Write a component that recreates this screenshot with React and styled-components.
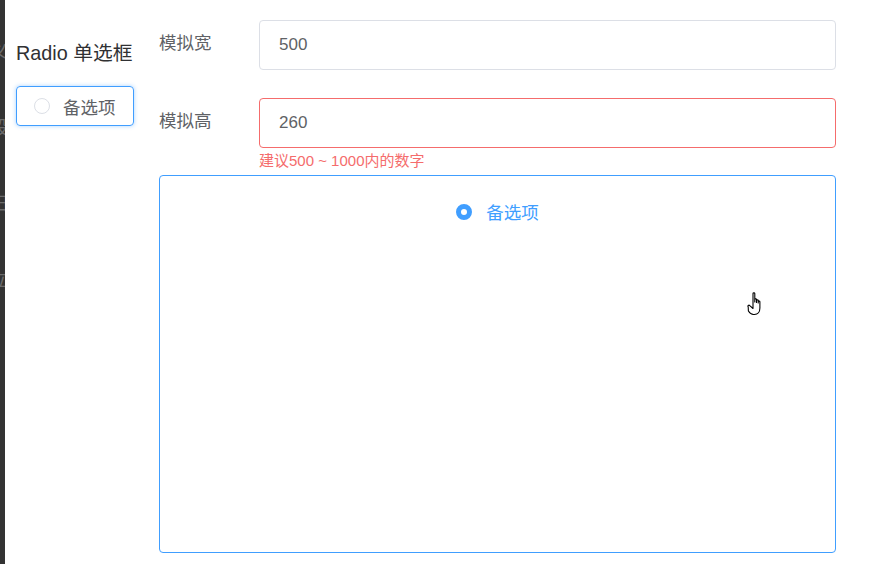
import React from 'react'
import styled, { createGlobalStyle } from 'styled-components'

const GlobalStyle = createGlobalStyle`
  html, body {
    margin: 0;
    padding: 0;
    background: #fff;
  }
  body {
    font-family: "Liberation Sans", "Noto Sans CJK SC", sans-serif;
    color: #606266;
  }
`

const Page = styled.div`
  display: flex;
  width: 884px;
  height: 564px;
  overflow: hidden;
  position: relative;
`

const SideStrip = styled.div`
  width: 5px;
  flex-shrink: 0;
  background: #333333;
  overflow: hidden;
  display: flex;
  flex-direction: column;
  padding-top: 38px;
  gap: 48px;
`

const StripGlyph = styled.span`
  display: block;
  margin-left: -10px;
  font-size: 18px;
  line-height: 28px;
  color: #6b6b6b;
  white-space: nowrap;
`

const LeftPanel = styled.div`
  width: 154px;
  flex-shrink: 0;
  padding-left: 11px;
  padding-top: 39px;
  box-sizing: border-box;
`

const Title = styled.div`
  font-size: 19.8px;
  line-height: 28px;
  color: #303133;
  white-space: nowrap;
`

const RadioBox = styled.div`
  margin-top: 19px;
  width: 118px;
  height: 40px;
  box-sizing: border-box;
  border: 1px solid #409eff;
  border-radius: 4px;
  box-shadow: 0 0 4px rgba(64, 158, 255, 0.45);
  display: flex;
  align-items: center;
  padding-left: 17px;
  gap: 13px;
`

const Dot = styled.span`
  width: 16px;
  height: 16px;
  box-sizing: border-box;
  border-radius: 50%;
  flex-shrink: 0;
  border: ${p => (p.$checked ? '5px solid #409eff' : '1px solid #dcdfe6')};
  background: #fff;
`

const RadioText = styled.span`
  font-size: 17.5px;
  color: ${p => (p.$checked ? '#409eff' : '#606266')};
`

const RightPanel = styled.div`
  flex: 1;
  padding-top: 20px;
  padding-right: 48px;
  display: flex;
  flex-direction: column;
`

const FormRow = styled.div`
  display: flex;
  align-items: center;
  margin-bottom: ${p => p.$mb || 0}px;
`

const Label = styled.div`
  width: 100px;
  font-size: 17.5px;
  line-height: 24px;
  padding-bottom: 4px;
  color: #606266;
`

const InputBox = styled.div`
  flex: 1;
  height: 50px;
  box-sizing: border-box;
  border: 1px solid ${p => (p.$error ? '#f56c6c' : '#dcdfe6')};
  border-radius: 4px;
  display: flex;
  align-items: center;
  padding-left: 19px;
  font-size: 17px;
  color: #606266;
`

const ErrorText = styled.div`
  margin-left: 100px;
  margin-top: 4px;
  height: 23px;
  font-size: 15px;
  line-height: 18px;
  color: #f56c6c;
  white-space: nowrap;
`

const Canvas = styled.div`
  width: 677px;
  height: 378px;
  box-sizing: border-box;
  border: 1px solid #409eff;
  border-radius: 4px;
  display: flex;
  justify-content: center;
  align-items: flex-start;
  padding-top: 23px;
`

const RadioInline = styled.div`
  display: flex;
  align-items: center;
  gap: 14px;
`

const Cursor = styled.svg`
  position: absolute;
  left: 747px;
  top: 291px;
`

export default function App() {
  return (
    <>
      <GlobalStyle />
      <Page>
        <SideStrip>
          <StripGlyph>义</StripGlyph>
          <StripGlyph>段</StripGlyph>
          <StripGlyph>田</StripGlyph>
          <StripGlyph>立</StripGlyph>
        </SideStrip>
        <LeftPanel>
          <Title>Radio 单选框</Title>
          <RadioBox>
            <Dot />
            <RadioText>备选项</RadioText>
          </RadioBox>
        </LeftPanel>
        <RightPanel>
          <FormRow $mb={28}>
            <Label>模拟宽</Label>
            <InputBox>500</InputBox>
          </FormRow>
          <FormRow>
            <Label>模拟高</Label>
            <InputBox $error>260</InputBox>
          </FormRow>
          <ErrorText>建议500 ~ 1000内的数字</ErrorText>
          <Canvas>
            <RadioInline>
              <Dot $checked />
              <RadioText $checked>备选项</RadioText>
            </RadioInline>
          </Canvas>
        </RightPanel>
        <Cursor width="20" height="26" viewBox="0 0 20 26">
          <path
            d="M6 2.5c0-1 1.8-1 1.8 0V11V8.5c0-1 1.7-1 1.7 0V11.5V9.5c0-1 1.7-1 1.7 0v2.5V10.8c0-1 1.7-1 1.7 0v6.2c0 3.5-2 6.5-5.5 6.5h-1c-2.5 0-3.7-1.5-5-3.5L1.2 16c-.8-1.2.6-2.4 1.6-1.4L6 17.5z"
            fill="#fff"
            stroke="#000"
            strokeWidth="1.1"
            strokeLinejoin="round"
          />
        </Cursor>
      </Page>
    </>
  )
}
